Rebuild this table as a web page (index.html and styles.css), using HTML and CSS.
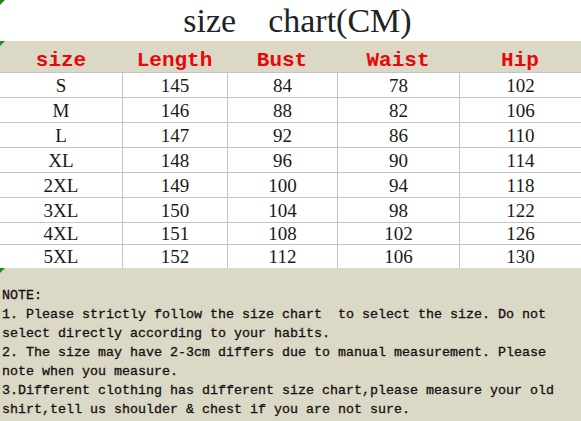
FILE: index.html
```html
<!DOCTYPE html>
<html>
<head>
<meta charset="utf-8">
<link rel="stylesheet" href="styles.css">
</head>
<body>
<div class="page">
  <div class="title"><span class="mark"></span><span class="w1">size</span><span class="w2">chart(CM)</span></div>
  <div class="chart">
    <div class="hd"><span class="mark"></span>size</div><div class="hd">Length</div><div class="hd">Bust</div><div class="hd">Waist</div><div class="hd">Hip</div>
    <div class="c first">S</div><div class="c">145</div><div class="c">84</div><div class="c">78</div><div class="c">102</div>
    <div class="c first">M</div><div class="c">146</div><div class="c">88</div><div class="c">82</div><div class="c">106</div>
    <div class="c first">L</div><div class="c">147</div><div class="c">92</div><div class="c">86</div><div class="c">110</div>
    <div class="c first">XL</div><div class="c">148</div><div class="c">96</div><div class="c">90</div><div class="c">114</div>
    <div class="c first">2XL</div><div class="c">149</div><div class="c">100</div><div class="c">94</div><div class="c">118</div>
    <div class="c first">3XL</div><div class="c">150</div><div class="c">104</div><div class="c">98</div><div class="c">122</div>
    <div class="c first">4XL</div><div class="c">151</div><div class="c">108</div><div class="c">102</div><div class="c">126</div>
    <div class="c first">5XL</div><div class="c">152</div><div class="c">112</div><div class="c">106</div><div class="c">130</div>
  </div>
  <div class="notes"><span class="mark"></span><pre class="txt">NOTE:
1. Please strictly follow the size chart  to select the size. Do not
select directly according to your habits.
2. The size may have 2-3cm differs due to manual measurement. Please
note when you measure.
3.Different clothing has different size chart,please measure your old
shirt,tell us shoulder &amp; chest if you are not sure.</pre></div>
</div>
</body>
</html>
```

FILE: styles.css
```css
html, body {
  margin: 0;
  padding: 0;
  background: #ffffff;
}
.page {
  width: 581px;
  height: 421px;
  overflow: hidden;
  display: flex;
  flex-direction: column;
}
.mark {
  position: absolute;
  left: 0;
  top: 0;
  width: 0;
  height: 0;
  border-top: 5px solid #1f8a1f;
  border-right: 5px solid transparent;
}
.title {
  position: relative;
  height: 41px;
  display: flex;
  justify-content: center;
  align-items: center;
  padding-left: 14px;
  box-sizing: border-box;
  font-family: "Liberation Serif", serif;
  font-size: 34px;
  color: #222;
  line-height: 41px;
}
.w1 {
  margin-right: 32px;
}
.chart {
  display: grid;
  grid-template-columns: 122px 105px 110px 122px 122px;
  grid-template-rows: 31px 25px 25px 25px 25px 25px 25px 22px 24px;
}
.hd {
  position: relative;
  background: #dcd8c6;
  color: #e8080c;
  font-family: "Liberation Mono", monospace;
  font-weight: bold;
  font-size: 21px;
  display: flex;
  align-items: center;
  justify-content: center;
  padding-top: 7px;
  box-sizing: border-box;
}
.c {
  border-top: 1px solid #c4c4d0;
  border-left: 1px solid #c4c4d0;
  font-family: "Liberation Serif", serif;
  font-size: 19px;
  color: #1a1a1a;
  display: flex;
  align-items: center;
  justify-content: center;
  padding-top: 1px;
  box-sizing: border-box;
  background: #fff;
}
.c.first {
  border-left: none;
}
.notes {
  position: relative;
  flex: 1;
  background: #dcd8c6;
  padding: 18px 0 0 2px;
}
.txt {
  margin: 0;
  font-family: "Liberation Mono", monospace;
  font-size: 13.33px;
  line-height: 19px;
  color: #111;
  -webkit-text-stroke: 0.3px #111;
  white-space: pre;
}
```
